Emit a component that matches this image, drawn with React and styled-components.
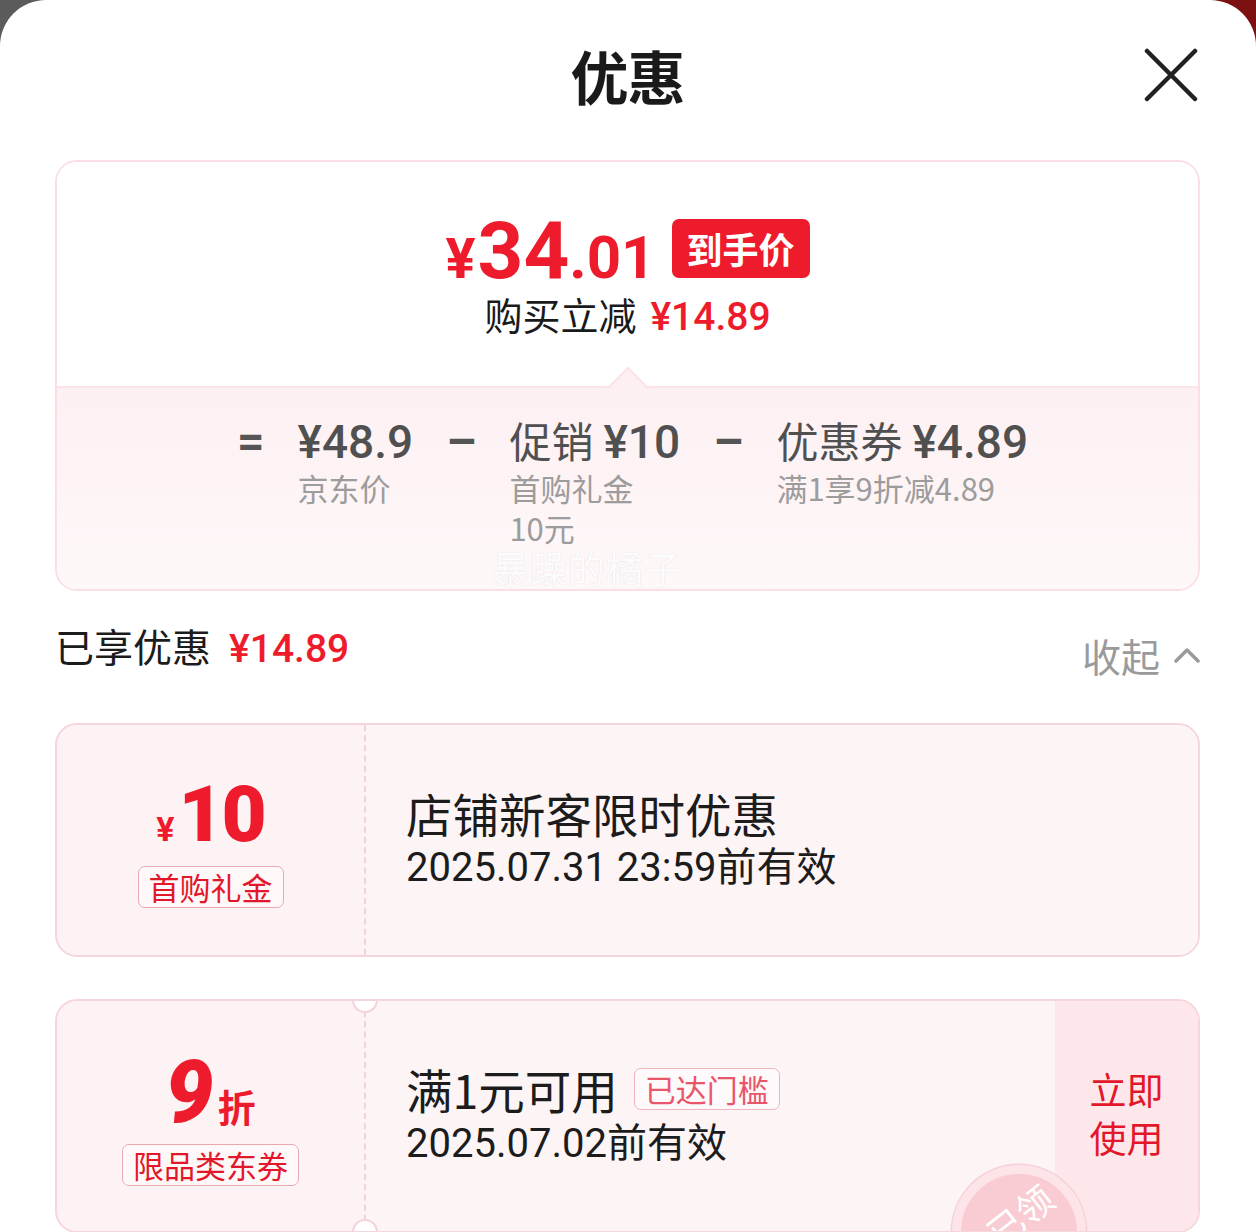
import React from 'react';
import styled, { createGlobalStyle } from 'styled-components';

const RED = '#ee1b2c';
const CJK = '"Noto Sans CJK SC", "Noto Sans", sans-serif';
const NUM = 'Roboto, "Noto Sans CJK SC", sans-serif';

const Global = createGlobalStyle`
  html, body { margin: 0; padding: 0; }
  body { background: #fff; font-family: ${CJK}; }
`;

const Backdrop = styled.div`
  width: 1256px;
  height: 1232px;
  overflow: hidden;
  background: linear-gradient(90deg, #5b5b5b 0 50%, #7c1111 50% 100%);
`;

const Sheet = styled.div`
  background: #fff;
  border-radius: 46px 46px 0 0;
  min-height: 100%;
  padding: 0 56px 0 55px;
  box-sizing: border-box;
`;

const Header = styled.header`
  height: 150px;
  display: grid;
  grid-template-columns: 1fr auto 1fr;
  align-items: center;
  margin-bottom: 10px;
`;

const Title = styled.h1`
  grid-column: 2;
  margin: 0;
  font-size: 58px;
  font-weight: 700;
  line-height: 1;
  color: #1a1a1a;
  letter-spacing: -1px;
`;

const CloseBtn = styled.button`
  justify-self: end;
  margin-right: 2px;
  width: 54px;
  height: 54px;
  padding: 0;
  border: 0;
  background: none;
  display: flex;
  align-items: center;
  justify-content: center;
`;

const SummaryCard = styled.section`
  position: relative;
  border: 2px solid #fbdfe4;
  border-radius: 22px;
  overflow: hidden;
`;

const TopArea = styled.div`
  height: 224px;
  box-sizing: border-box;
  padding-top: 52px;
  display: flex;
  flex-direction: column;
  align-items: center;
  background: #fff;
`;

const PriceRow = styled.div`
  height: 68px;
  display: flex;
  align-items: center;
  gap: 16px;
`;

const Price = styled.div`
  display: flex;
  align-items: baseline;
  color: ${RED};
  font-family: ${NUM};
  font-weight: 700;
  line-height: 1;
  padding-top: 6px;
`;

const PricePart = styled.span`
  font-size: ${(p) => p.$size}px;
  margin-right: ${(p) => p.$gap || 0}px;
`;

const Badge = styled.span`
  height: 59px;
  padding: 0 15px;
  display: flex;
  align-items: center;
  background: ${RED};
  color: #fff;
  border-radius: 7px;
  font-size: 36px;
  font-weight: 700;
`;

const ReduceRow = styled.div`
  margin-top: 8px;
  font-size: 38px;
  line-height: 48px;
  color: #1a1a1a;
  display: flex;
  align-items: baseline;
`;

const RedAmount = styled.span`
  color: ${RED};
  font-family: ${NUM};
  font-weight: 500;
  font-size: ${(p) => p.$size || 38}px;
  margin-left: ${(p) => p.$gap || 14}px;
`;

const BottomArea = styled.div`
  position: relative;
  height: 203px;
  box-sizing: border-box;
  padding-top: 26px;
  border-top: 2px solid #fbe4e8;
  background: linear-gradient(180deg, #fdf0f2 0%, #fef8f9 100%);

  &::before {
    content: '';
    position: absolute;
    left: 50%;
    top: -15px;
    width: 28px;
    height: 28px;
    transform: translateX(-50%) rotate(45deg);
    background: #fdf0f2;
    border-top: 2px solid #fbe4e8;
    border-left: 2px solid #fbe4e8;
  }
`;

const BreakRow = styled.div`
  display: flex;
  justify-content: center;
  align-items: flex-start;
  gap: 33px;
  padding-left: 10px;
`;

const Op = styled.span`
  font-family: ${NUM};
  font-weight: 700;
  font-size: 48px;
  line-height: 52px;
  color: #555;
  padding-top: 2px;
`;

const BreakItem = styled.div`
  display: flex;
  flex-direction: column;
`;

const BreakMain = styled.div`
  font-size: 42px;
  line-height: 52px;
  color: #505050;
  white-space: nowrap;
`;

const Amount = styled.span`
  font-family: ${NUM};
  font-weight: 500;
  font-size: 46px;
  margin-left: ${(p) => p.$gap || 0}px;
`;

const BreakSub = styled.div`
  font-size: 31px;
  line-height: 40px;
  color: #9c9c9c;
  white-space: nowrap;
`;

const Watermark = styled.span`
  position: absolute;
  left: 435px;
  top: 160px;
  font-size: 37px;
  line-height: 40px;
  color: rgba(255, 255, 255, 0.95);
  text-shadow: 0 0 1px rgba(160, 140, 145, 0.35);
  letter-spacing: 1px;
`;

const SectionHeader = styled.div`
  height: 132px;
  box-sizing: border-box;
  padding-top: 30px;
  display: flex;
  justify-content: space-between;
  align-items: flex-start;
`;

const Enjoyed = styled.div`
  font-size: 39px;
  line-height: 48px;
  color: #1c1c1c;
  display: flex;
  align-items: baseline;
`;

const Collapse = styled.button`
  margin-top: 10px;
  padding: 0;
  border: 0;
  background: none;
  font-family: ${CJK};
  font-size: 39px;
  line-height: 48px;
  color: #9a9a9a;
  display: flex;
  align-items: center;
  gap: 14px;
`;

const CouponList = styled.div`
  display: flex;
  flex-direction: column;
  gap: 42px;
`;

const Coupon = styled.div`
  position: relative;
  height: 234px;
  box-sizing: border-box;
  display: flex;
  border: 2px solid #f6d6dc;
  border-radius: 22px;
  background: #fdf3f5;
  overflow: hidden;
`;

const CouponLeft = styled.div`
  position: relative;
  width: 309px;
  flex: none;
  border-right: 2px dashed #f0d2d8;
  display: flex;
  flex-direction: column;
  align-items: center;
  justify-content: center;
  padding-top: 4px;
  box-sizing: border-box;

  ${(p) =>
    p.$notched &&
    `
    &::before, &::after {
      content: '';
      position: absolute;
      right: -14px;
      width: 22px;
      height: 22px;
      border-radius: 50%;
      background: #fff;
      border: 2px solid #f3d3d9;
    }
    &::before { top: -14px; }
    &::after { bottom: -14px; }
  `}
`;

const Value = styled.div`
  display: flex;
  align-items: baseline;
  color: ${RED};
  font-family: ${NUM};
  font-weight: 700;
  line-height: 1;
`;

const ValueUnit = styled.span`
  font-family: ${(p) => (p.$cjk ? CJK : NUM)};
  font-size: ${(p) => p.$size}px;
  font-weight: 700;
  margin: 0 ${(p) => p.$gap || 0}px 0 ${(p) => p.$lgap || 0}px;
`;

const ValueNum = styled.span`
  font-size: ${(p) => p.$size}px;
  font-weight: 900;
  font-style: ${(p) => (p.$italic ? 'italic' : 'normal')};
  letter-spacing: -2px;
`;

const Tag = styled.span`
  margin-top: ${(p) => p.$mt || 0}px;
  padding: 0 10px;
  border: 1.5px solid ${(p) => (p.$soft ? '#f1b3bc' : '#eaa8b1')};
  border-radius: 7px;
  background: rgba(255, 255, 255, 0.45);
  color: ${(p) => (p.$soft ? '#e9566a' : '#e2182a')};
  font-size: 31px;
  line-height: 40px;
  white-space: nowrap;
`;

const CouponBody = styled.div`
  flex: 1;
  padding-left: 40px;
  display: flex;
  flex-direction: column;
  justify-content: center;
  background: #fdf4f6;
`;

const CouponTitle = styled.div`
  font-size: 46.5px;
  line-height: 56px;
  color: #1c1c1c;
  display: flex;
  align-items: center;
  gap: 16px;
`;

const CouponDate = styled.div`
  font-family: ${NUM};
  font-size: 40px;
  line-height: 54px;
  color: #1c1c1c;
`;

const Action = styled.button`
  width: 143px;
  flex: none;
  padding: 0 0 6px;
  border: 0;
  background: #fde7eb;
  color: #e2182a;
  font-family: ${CJK};
  font-size: 37px;
  line-height: 48px;
  display: flex;
  align-items: center;
  justify-content: center;
`;

const ActionText = styled.span`
  width: 2em;
`;

const Stamp = styled.div`
  position: absolute;
  left: 895px;
  top: 164px;
  width: 134px;
  height: 134px;
  box-sizing: border-box;
  border-radius: 50%;
  border: 9px solid #fde4e8;
  box-shadow: 0 0 0 1.5px #f7d0d6;
  background: #f9cbd2;
  display: flex;
  align-items: flex-start;
  justify-content: center;
  padding-top: 14px;
`;

const StampText = styled.span`
  color: #fff;
  font-size: 36px;
  transform: rotate(-38deg);
`;

export default function App() {
  return (
    <>
      <Global />
      <Backdrop>
        <Sheet>
          <Header>
            <Title>优惠</Title>
            <CloseBtn aria-label="关闭">
              <svg width="54" height="54" viewBox="0 0 54 54">
                <path d="M3 3 L51 51 M51 3 L3 51" stroke="#222" strokeWidth="4.5" strokeLinecap="round" />
              </svg>
            </CloseBtn>
          </Header>

          <SummaryCard>
            <TopArea>
              <PriceRow>
                <Price>
                  <PricePart $size={56} $gap={2}>¥</PricePart>
                  <PricePart $size={80}>34</PricePart>
                  <PricePart $size={60}>.01</PricePart>
                </Price>
                <Badge>到手价</Badge>
              </PriceRow>
              <ReduceRow>
                购买立减
                <RedAmount $size={39}>¥14.89</RedAmount>
              </ReduceRow>
            </TopArea>
            <BottomArea>
              <BreakRow>
                <Op>=</Op>
                <BreakItem>
                  <BreakMain>
                    <Amount>¥48.9</Amount>
                  </BreakMain>
                  <BreakSub>京东价</BreakSub>
                </BreakItem>
                <Op>–</Op>
                <BreakItem>
                  <BreakMain>
                    促销<Amount $gap={10}>¥10</Amount>
                  </BreakMain>
                  <BreakSub>
                    首购礼金
                    <br />
                    10元
                  </BreakSub>
                </BreakItem>
                <Op>–</Op>
                <BreakItem>
                  <BreakMain>
                    优惠券<Amount $gap={10}>¥4.89</Amount>
                  </BreakMain>
                  <BreakSub>满1享9折减4.89</BreakSub>
                </BreakItem>
              </BreakRow>
              <Watermark>暴躁的橘子</Watermark>
            </BottomArea>
          </SummaryCard>

          <SectionHeader>
            <Enjoyed>
              已享优惠
              <RedAmount $size={39} $gap={18}>¥14.89</RedAmount>
            </Enjoyed>
            <Collapse>
              收起
              <svg width="26" height="16" viewBox="0 0 26 16">
                <path d="M2 14 L13 3 L24 14" fill="none" stroke="#9a9a9a" strokeWidth="3.5" strokeLinecap="round" strokeLinejoin="round" />
              </svg>
            </Collapse>
          </SectionHeader>

          <CouponList>
            <Coupon>
              <CouponLeft>
                <Value>
                  <ValueUnit $size={34} $gap={4}>¥</ValueUnit>
                  <ValueNum $size={78}>10</ValueNum>
                </Value>
                <Tag $mt={12}>首购礼金</Tag>
              </CouponLeft>
              <CouponBody>
                <CouponTitle>店铺新客限时优惠</CouponTitle>
                <CouponDate>2025.07.31 23:59前有效</CouponDate>
              </CouponBody>
            </Coupon>

            <Coupon>
              <CouponLeft $notched>
                <Value>
                  <ValueNum $size={86} $italic>9</ValueNum>
                  <ValueUnit $cjk $size={38} $lgap={6}>折</ValueUnit>
                </Value>
                <Tag $mt={8}>限品类东券</Tag>
              </CouponLeft>
              <CouponBody>
                <CouponTitle>
                  满1元可用
                  <Tag $soft>已达门槛</Tag>
                </CouponTitle>
                <CouponDate>2025.07.02前有效</CouponDate>
              </CouponBody>
              <Action>
                <ActionText>立即使用</ActionText>
              </Action>
              <Stamp>
                <StampText>已领</StampText>
              </Stamp>
            </Coupon>
          </CouponList>
        </Sheet>
      </Backdrop>
    </>
  );
}
